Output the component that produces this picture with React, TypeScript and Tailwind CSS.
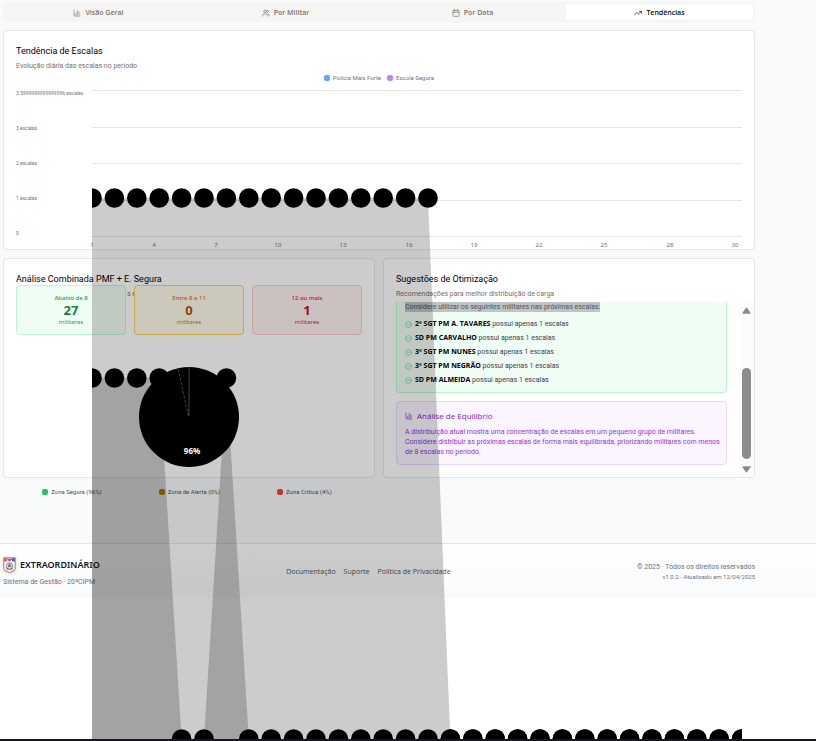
import { Calendar, ChartColumn, CircleCheck, TrendingUp, Users } from "lucide-react";

const tabs = [
  { label: "Visão Geral", Icon: ChartColumn },
  { label: "Por Militar", Icon: Users },
  { label: "Por Data", Icon: Calendar },
  { label: "Tendências", Icon: TrendingUp },
];

const yTicks = [
  { label: "3.5999999999999996 escalas", y: 5, line: 3 },
  { label: "3 escalas", y: 40, line: 40 },
  { label: "2 escalas", y: 75, line: 76 },
  { label: "1 escalas", y: 110, line: 113 },
  { label: "0", y: 145, line: 149 },
];

const xTicks = [
  { label: "1", x: 76 },
  { label: "4", x: 138 },
  { label: "7", x: 200 },
  { label: "10", x: 262 },
  { label: "13", x: 327 },
  { label: "16", x: 393 },
  { label: "19", x: 458 },
  { label: "22", x: 523 },
  { label: "25", x: 588 },
  { label: "28", x: 654 },
  { label: "30", x: 719 },
];

const STEP = 22.4;
const HIGH = 110;
const MID = 290;
const LOW = 651;
const days = Array.from({ length: 30 }, (_, i) => i);
const seriesA = days.map((i) => ({ x: i * STEP, y: i < 16 ? HIGH : LOW }));
const seriesB = days.map((i) => ({ x: i * STEP, y: i < 4 || i === 6 ? MID : LOW }));
const areaPath = (pts: { x: number; y: number }[]) =>
  "M0 " + LOW + " " + pts.map((p) => "L" + p.x + " " + p.y).join(" ") + " Z";

const stats = [
  { label: "Abaixo de 8", value: 27, box: "border-[#bbf7d0] bg-[#f0fdf4]", soft: "text-[#16a34a]", strong: "text-[#15803d]" },
  { label: "Entre 8 e 11", value: 0, box: "border-[#fcd34d] bg-[#fffbeb]", soft: "text-[#d97706]", strong: "text-[#b45309]" },
  { label: "12 ou mais", value: 1, box: "border-[#fecaca] bg-[#fef2f2]", soft: "text-[#dc2626]", strong: "text-[#b91c1c]" },
];

const zones = [
  { label: "Zona Segura (96%)", color: "bg-[#22c55e]" },
  { label: "Zona de Alerta (0%)", color: "bg-[#ca8a04]" },
  { label: "Zona Crítica (4%)", color: "bg-[#ef4444]" },
];

const people = ["2º SGT PM A. TAVARES", "SD PM CARVALHO", "3º SGT PM NUNES", "3º SGT PM NEGRÃO", "SD PM ALMEIDA"];

function AreaOverlay() {
  return (
    <svg
      className="pointer-events-none absolute top-0 left-[76px] z-10 h-[651px] w-[650px] overflow-hidden"
      viewBox="0 0 650 651"
      aria-hidden="true"
    >
      {[seriesA, seriesB].map((s, k) => (
        <g key={k}>
          <path d={areaPath(s)} fill="#000" fillOpacity="0.2" />
          {s.map((p, i) => (
            <circle key={i} cx={p.x} cy={p.y} r="9.8" fill="#000" />
          ))}
        </g>
      ))}
    </svg>
  );
}

function TrendCard() {
  return (
    <section className="rounded-[4px] border border-[#e7e5e4] bg-white px-3 pt-[14px]">
      <h2 className="text-[9px] leading-[12px] text-black">Tendência de Escalas</h2>
      <p className="mt-[4px] text-[7px] leading-[10px] text-[#78716c]">Evolução diária das escalas no período</p>
      <div className="flex h-[14px] items-center justify-center gap-[6px] text-[6px] leading-[8px] text-[#6b7280]">
        <span className="flex items-center gap-[3px]"><i className="size-[6px] rounded-[2px] bg-[#60a5fa]" />Polícia Mais Forte</span>
        <span className="flex items-center gap-[3px]"><i className="size-[6px] rounded-[2px] bg-[#c084fc]" />Escola Segura</span>
      </div>
      <div className="relative mt-[3px] h-[161px]">
        <svg className="block h-full w-full overflow-visible" role="img" aria-label="Tendência de Escalas">
          {yTicks.map((t) => (
            <g key={t.label}>
              <text x="0" y={t.y + 2} className="fill-[#6b7280] text-[5px]">{t.label}</text>
              <rect x="76" y={t.line - 1} width="650" height="1" className="fill-[#e7e5e4]" />
            </g>
          ))}
          {xTicks.map((t) => (
            <text key={t.label} x={t.x} y="159" textAnchor="middle" className="fill-[#6b7280] font-['Noto_Sans',sans-serif] text-[6px]">{t.label}</text>
          ))}
        </svg>
        <AreaOverlay />
      </div>
    </section>
  );
}

function CombinedCard() {
  return (
    <section className="h-[220px] rounded-[4px] border border-[#e7e5e4] bg-white px-3 pt-[14px]">
      <h2 className="text-[9px] leading-[12px] text-black">Análise Combinada PMF + E. Segura</h2>
      <div className="relative">
        <p className="absolute top-[4px] left-0 pl-[111px] text-[7px] leading-[10px] whitespace-nowrap text-[#78716c]">s ex</p>
        <div className="relative grid grid-cols-3 gap-2 font-['Noto_Sans',sans-serif]">
          {stats.map((s) => (
            <div key={s.label} className={"flex h-[50px] flex-col items-center rounded-[4px] border pt-[8px] " + s.box}>
              <span className={"text-[6px] leading-[8px] font-medium " + s.soft}>{s.label}</span>
              <span className={"text-[13px] leading-[16px] font-bold " + s.strong}>{s.value}</span>
              <span className={"text-[6px] leading-[8px] " + s.soft}>militares</span>
            </div>
          ))}
        </div>
      </div>
      <div className="mt-[32px] flex justify-center">
        <svg className="relative z-20 size-[100px]" viewBox="0 0 100 100" role="img" aria-label="Zona Segura 96%">
          <circle cx="50" cy="50" r="50" fill="#000" />
          <path d="M50 0V49" fill="none" stroke="#555" strokeWidth="0.8" />
          <path d="M39 2L49.5 49" fill="none" stroke="#555" strokeWidth="0.8" strokeDasharray="3 1.5" />
          <text x="53" y="87" textAnchor="middle" className="fill-white font-['Open_Sans',sans-serif] text-[8px] font-bold">96%</text>
        </svg>
      </div>
      <ul className="mt-[21px] flex justify-center gap-[57px] pr-1 text-[6px] leading-[8px] text-[#4b5563]">
        {zones.map((z) => (
          <li key={z.label} className="flex items-center gap-[3px] whitespace-nowrap">
            <i className={"size-[6px] rounded-[2px] " + z.color} />{z.label}
          </li>
        ))}
      </ul>
    </section>
  );
}

function SuggestionsCard() {
  return (
    <section className="flex h-[220px] flex-col overflow-hidden rounded-[4px] border border-[#e7e5e4] bg-white pt-[14px]">
      <h2 className="px-3 text-[9px] leading-[12px] text-black">Sugestões de Otimização</h2>
      <p className="mt-[4px] px-3 text-[7px] leading-[10px] text-[#78716c]">Recomendações para melhor distribuição de carga</p>
      <div className="mt-[3px] flex min-h-0 flex-1">
        <div className="flex min-w-0 flex-1 flex-col gap-2 px-3">
          <div className="h-[91px] rounded-b-[4px] border border-t-0 border-[#bbf7d0] bg-[#f0fdf4] px-2 text-[7px] text-[#374151]">
            <p className="leading-[10px]"><mark className="inline-block bg-[#bfc3c1] text-[#4b5563]">Considere utilizar os seguintes militares nas próximas escalas:</mark></p>
            <ul className="mt-[5px]">
              {people.map((p) => (
                <li key={p} className="flex h-[14px] items-center gap-[3px]">
                  <CircleCheck className="size-[7px] text-[#22c55e] opacity-80" />
                  <span><strong className="font-['Open_Sans',sans-serif] font-bold text-black">{p}</strong> possui apenas 1 escalas</span>
                </li>
              ))}
            </ul>
          </div>
          <div className="h-[64px] rounded-[4px] border border-[#e9d5ff] bg-[#faf5ff] pt-2 pr-1 pl-2">
            <h3 className="flex items-center gap-1 font-['Open_Sans',sans-serif] text-[8px] leading-[12px] font-medium text-[#7e22ce]"><ChartColumn className="size-2" />Análise de Equilíbrio</h3>
            <p className="mt-[5px] text-[7px] leading-[10px] text-[#9333ea]">A distribuição atual mostra uma concentração de escalas em um pequeno grupo de militares. Considere distribuir as próximas escalas de forma mais equilibrada, priorizando militares com menos de 8 escalas no período.</p>
          </div>
        </div>
        <div className="flex w-[15px] flex-col items-center bg-[#fcfcfc] pt-[5px] pb-[4px]" aria-hidden="true">
          <svg className="h-[7px] w-[9px]" viewBox="0 0 9 7"><path d="M4.5 .8L8.3 6.2H.7Z" fill="#8b8b8b" stroke="#8b8b8b" strokeLinejoin="round" /></svg>
          <i className="mt-auto h-[91px] w-[9px] rounded-full bg-[#8b8b8b]" />
          <svg className="mt-[7px] h-[7px] w-[9px]" viewBox="0 0 9 7"><path d="M4.5 6.2L8.3 .8H.7Z" fill="#8b8b8b" stroke="#8b8b8b" strokeLinejoin="round" /></svg>
        </div>
      </div>
    </section>
  );
}

function Crest() {
  return (
    <svg className="h-4 w-[13px] drop-shadow-sm" viewBox="0 0 13 16" aria-hidden="true">
      <path d="M.8 .8H12.2V11.5Q12.2 14.2 9 14.3L6.5 15.6L4 14.3Q.8 14.2 .8 11.5Z" fill="#fff" stroke="#b05a72" strokeWidth=".9" />
      <path d="M1.2 1.2H5L3.5 4.5H1.2Z" fill="#e05260" />
      <path d="M11.8 1.2H8L9.5 4.5H11.8Z" fill="#4355a8" />
      <path d="M4.5 2.5L6.5 1.3L8.5 2.5L7.5 4H5.5Z" fill="#de4458" />
      <circle cx="6.5" cy="8.9" r="3.3" fill="#d6d4dc" stroke="#77738a" strokeWidth=".7" />
      <path d="M2.5 10Q6.5 13.8 10.5 10L9.2 12.7H3.8Z" fill="#858a35" />
      <path d="M6.5 6.2L8.3 9.8H4.7Z" fill="#655c8c" />
    </svg>
  );
}

export default function App() {
  return (
    <div className="flex min-h-screen flex-col overflow-hidden bg-white font-['Roboto','Open_Sans',sans-serif]">
      <main className="bg-[#f9fafc] pt-[2px] pr-[61px] pb-[65px] pl-[3px]">
        <div role="tablist" className="grid h-5 grid-cols-4 rounded-[4px] bg-[#f5f5f4] p-[2px]">
          {tabs.map(({ label, Icon }, i) => (
            <button
              key={label}
              role="tab"
              aria-selected={i === 3}
              className={"flex items-center justify-center gap-1 rounded-[2px] pt-px font-['Open_Sans',sans-serif] text-[7px] leading-[10px] font-semibold " + (i === 3 ? "bg-white text-[#0c0a09]" : "text-[#78716c]")}
            >
              <Icon className="size-2" />{label}
            </button>
          ))}
        </div>
        <div className="mt-2 flex flex-col gap-2">
          <TrendCard />
          <div className="grid grid-cols-2 gap-2">
            <CombinedCard />
            <SuggestionsCard />
          </div>
        </div>
      </main>
      <footer className="flex h-[55px] items-center justify-between border-t border-[#e5e7eb] bg-linear-to-b from-white to-[#f9fafb] pt-px pr-[61px] pl-[3px]">
        <div>
          <div className="flex items-center gap-1 font-['Noto_Sans',sans-serif] text-[9px] leading-[16px] font-semibold text-[#0f172a]"><Crest />EXTRAORDINÁRIO</div>
          <p className="mt-1 text-[7px] leading-[10px] text-[#6b7280]">Sistema de Gestão · 20ªCIPM</p>
        </div>
        <nav className="flex gap-2 font-['Open_Sans',sans-serif] text-[7px] leading-[10px] font-medium whitespace-nowrap text-[#4b5563]">
          <a href="#documentacao">Documentação</a>
          <a href="#suporte">Suporte</a>
          <a href="#privacidade">Política de Privacidade</a>
        </nav>
        <div className="text-right text-[#6b7280]">
          <p className="text-[7px] leading-[10px]">© 2025 · Todos os direitos reservados</p>
          <p className="text-[6px] leading-[10px]">v1.0.2 - Atualizado em 12/04/2025</p>
        </div>
      </footer>
      <div className="mt-auto h-[2px] bg-[#0f172a]" />
    </div>
  );
}
